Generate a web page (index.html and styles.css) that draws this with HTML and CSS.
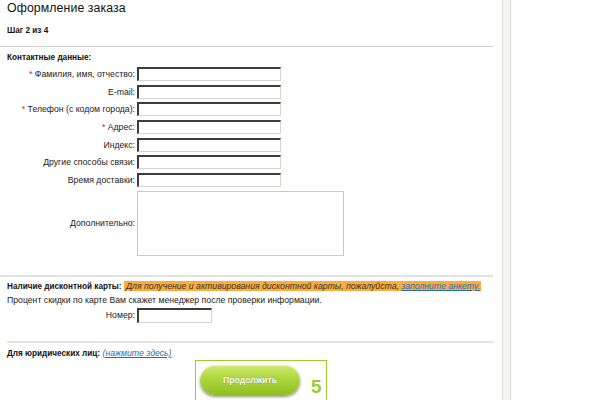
FILE: index.html
```html
<!DOCTYPE html>
<html lang="ru">
<head>
<meta charset="utf-8">
<title>Оформление заказа</title>
<link rel="stylesheet" href="styles.css">
</head>
<body>
<div class="page">
  <div class="main">
    <h1 class="title">Оформление заказа</h1>
    <div class="step">Шаг 2 из 4</div>
    <hr class="rule">
    <div class="section-title">Контактные данные:</div>
    <div class="form">
      <label class="lbl"><span class="req">*</span> Фамилия, имя, отчество:</label><input class="inp" type="text">
      <label class="lbl">E-mail:</label><input class="inp" type="text">
      <label class="lbl"><span class="req">*</span> Телефон (с кодом города):</label><input class="inp" type="text">
      <label class="lbl"><span class="req">*</span> Адрес:</label><input class="inp" type="text">
      <label class="lbl">Индекс:</label><input class="inp" type="text">
      <label class="lbl">Другие способы связи:</label><input class="inp" type="text">
      <label class="lbl">Время доставки:</label><input class="inp" type="text">
      <label class="lbl">Дополнительно:</label><textarea class="area"></textarea>
    </div>
    <hr class="rule rule-2">
    <div class="card-line"><b class="bold">Наличие дисконтной карты:</b> <span class="hl">Для получение и активирования дисконтной карты, пожалуйста, <a class="hl-link" href="#">заполните анкету.</a></span></div>
    <div class="note">Процент скидки по карте Вам скажет менеджер после проверки информации.</div>
    <div class="form form-num">
      <label class="lbl">Номер:</label><input class="inp inp-num" type="text">
    </div>
    <hr class="rule rule-3">
    <div class="legal"><b class="bold">Для юридических лиц:</b> <a class="legal-link" href="#">(нажмите здесь)</a></div>
    <div class="btn-row">
      <div class="btn-box">
        <button class="btn" type="button">Продолжить</button>
        <span class="num">5</span>
      </div>
    </div>
  </div>
  <div class="side-rule"></div>
</div>
</body>
</html>
```
FILE: styles.css
```css
html, body {
  margin: 0;
  padding: 0;
  background: #fff;
}
body {
  font-family: "Liberation Sans", Arial, sans-serif;
  font-size: 8.7px;
  color: #222;
}
.page {
  display: flex;
  height: 400px;
  overflow: hidden;
}
.main {
  width: 493px;
  flex: none;
}
.side-rule {
  width: 7px;
  margin-left: 9px;
  flex: none;
  background: #f3f3f1;
  border-left: 1px solid #dcdcda;
  border-right: 1px solid #dcdcda;
}
.title {
  margin: 0;
  padding: 1px 0 0 7px;
  font-size: 12.3px;
  font-weight: normal;
  line-height: 15px;
  color: #111;
  letter-spacing: 0.1px;
}
.step {
  padding: 9px 0 0 7px;
  font-weight: bold;
  font-size: 8.2px;
  line-height: 12px;
  color: #111;
}
.rule {
  margin: 9px 0 0 0;
  border: 0;
  height: 1px;
  background: #cfcfcf;
}
.section-title {
  padding: 5px 0 0 7px;
  font-weight: bold;
  font-size: 8.2px;
  line-height: 12px;
  color: #111;
}
.form {
  display: grid;
  grid-template-columns: 135px 144px;
  column-gap: 2px;
  row-gap: 3.7px;
  align-items: center;
  margin-top: 3px;
}
.lbl {
  text-align: right;
  line-height: 12px;
  white-space: nowrap;
  color: #222;
}
.req {
  color: #e2241b;
}
.inp {
  box-sizing: border-box;
  width: 144px;
  height: 14px;
  margin: 0;
  padding: 0;
  background: #fff;
  border-style: solid;
  border-width: 2px 1px 1px 2px;
  border-color: #3c3c3c #d6d3ce #d6d3ce #3c3c3c;
}
.area {
  box-sizing: border-box;
  width: 207px;
  height: 65px;
  margin: 0;
  padding: 0;
  resize: none;
  border: 1px solid #c8c8c8;
  background: #fff;
}
.rule-2 {
  margin-top: 19px;
  height: 2px;
  background: #e2e2e2;
}
.card-line {
  padding: 3px 0 0 7px;
  line-height: 12px;
  white-space: nowrap;
}
.bold {
  font-weight: bold;
  font-size: 8.2px;
  color: #111;
}
.hl {
  background: #fdac3c;
  font-style: italic;
  color: #333;
  padding: 0 1px 0 2px;
}
.hl-link {
  color: #1f6fb5;
  text-decoration: underline;
}
.note {
  padding: 1px 0 0 7px;
  line-height: 12px;
  white-space: nowrap;
}
.form-num {
  margin-top: 2px;
}
.inp-num {
  width: 75px;
  height: 15px;
}
.rule-3 {
  margin: 18px 0 0 7px;
  height: 2px;
  background: #e2e2e2;
}
.legal {
  padding: 4px 0 0 7px;
  line-height: 12px;
}
.legal-link {
  color: #1f6fb5;
  font-style: italic;
  text-decoration: underline;
}
.btn-row {
  display: flex;
  padding-left: 195px;
  margin-top: 0;
}
.btn-box {
  display: flex;
  align-items: flex-end;
  width: 132px;
  height: 41px;
  box-sizing: border-box;
  border: 1px solid #9fcb2e;
  padding: 4px 0 5px 4px;
}
.btn {
  width: 100px;
  height: 30px;
  margin: 0;
  padding: 0;
  border: 0;
  border-radius: 15px;
  background: linear-gradient(#d3ec73 0%, #b0d843 40%, #8fbf1f 100%);
  box-shadow: 0 2px 3px rgba(60, 70, 20, 0.55), inset 0 1px 0 rgba(255,255,255,0.6);
  color: #fff;
  font-family: "Liberation Sans", Arial, sans-serif;
  font-weight: bold;
  font-size: 8.7px;
  text-shadow: 0 0 1px rgba(60, 90, 0, 0.6);
}
.num {
  margin-left: 11px;
  color: #9ccc31;
  font-weight: bold;
  font-size: 19px;
  line-height: 16px;
}
```
